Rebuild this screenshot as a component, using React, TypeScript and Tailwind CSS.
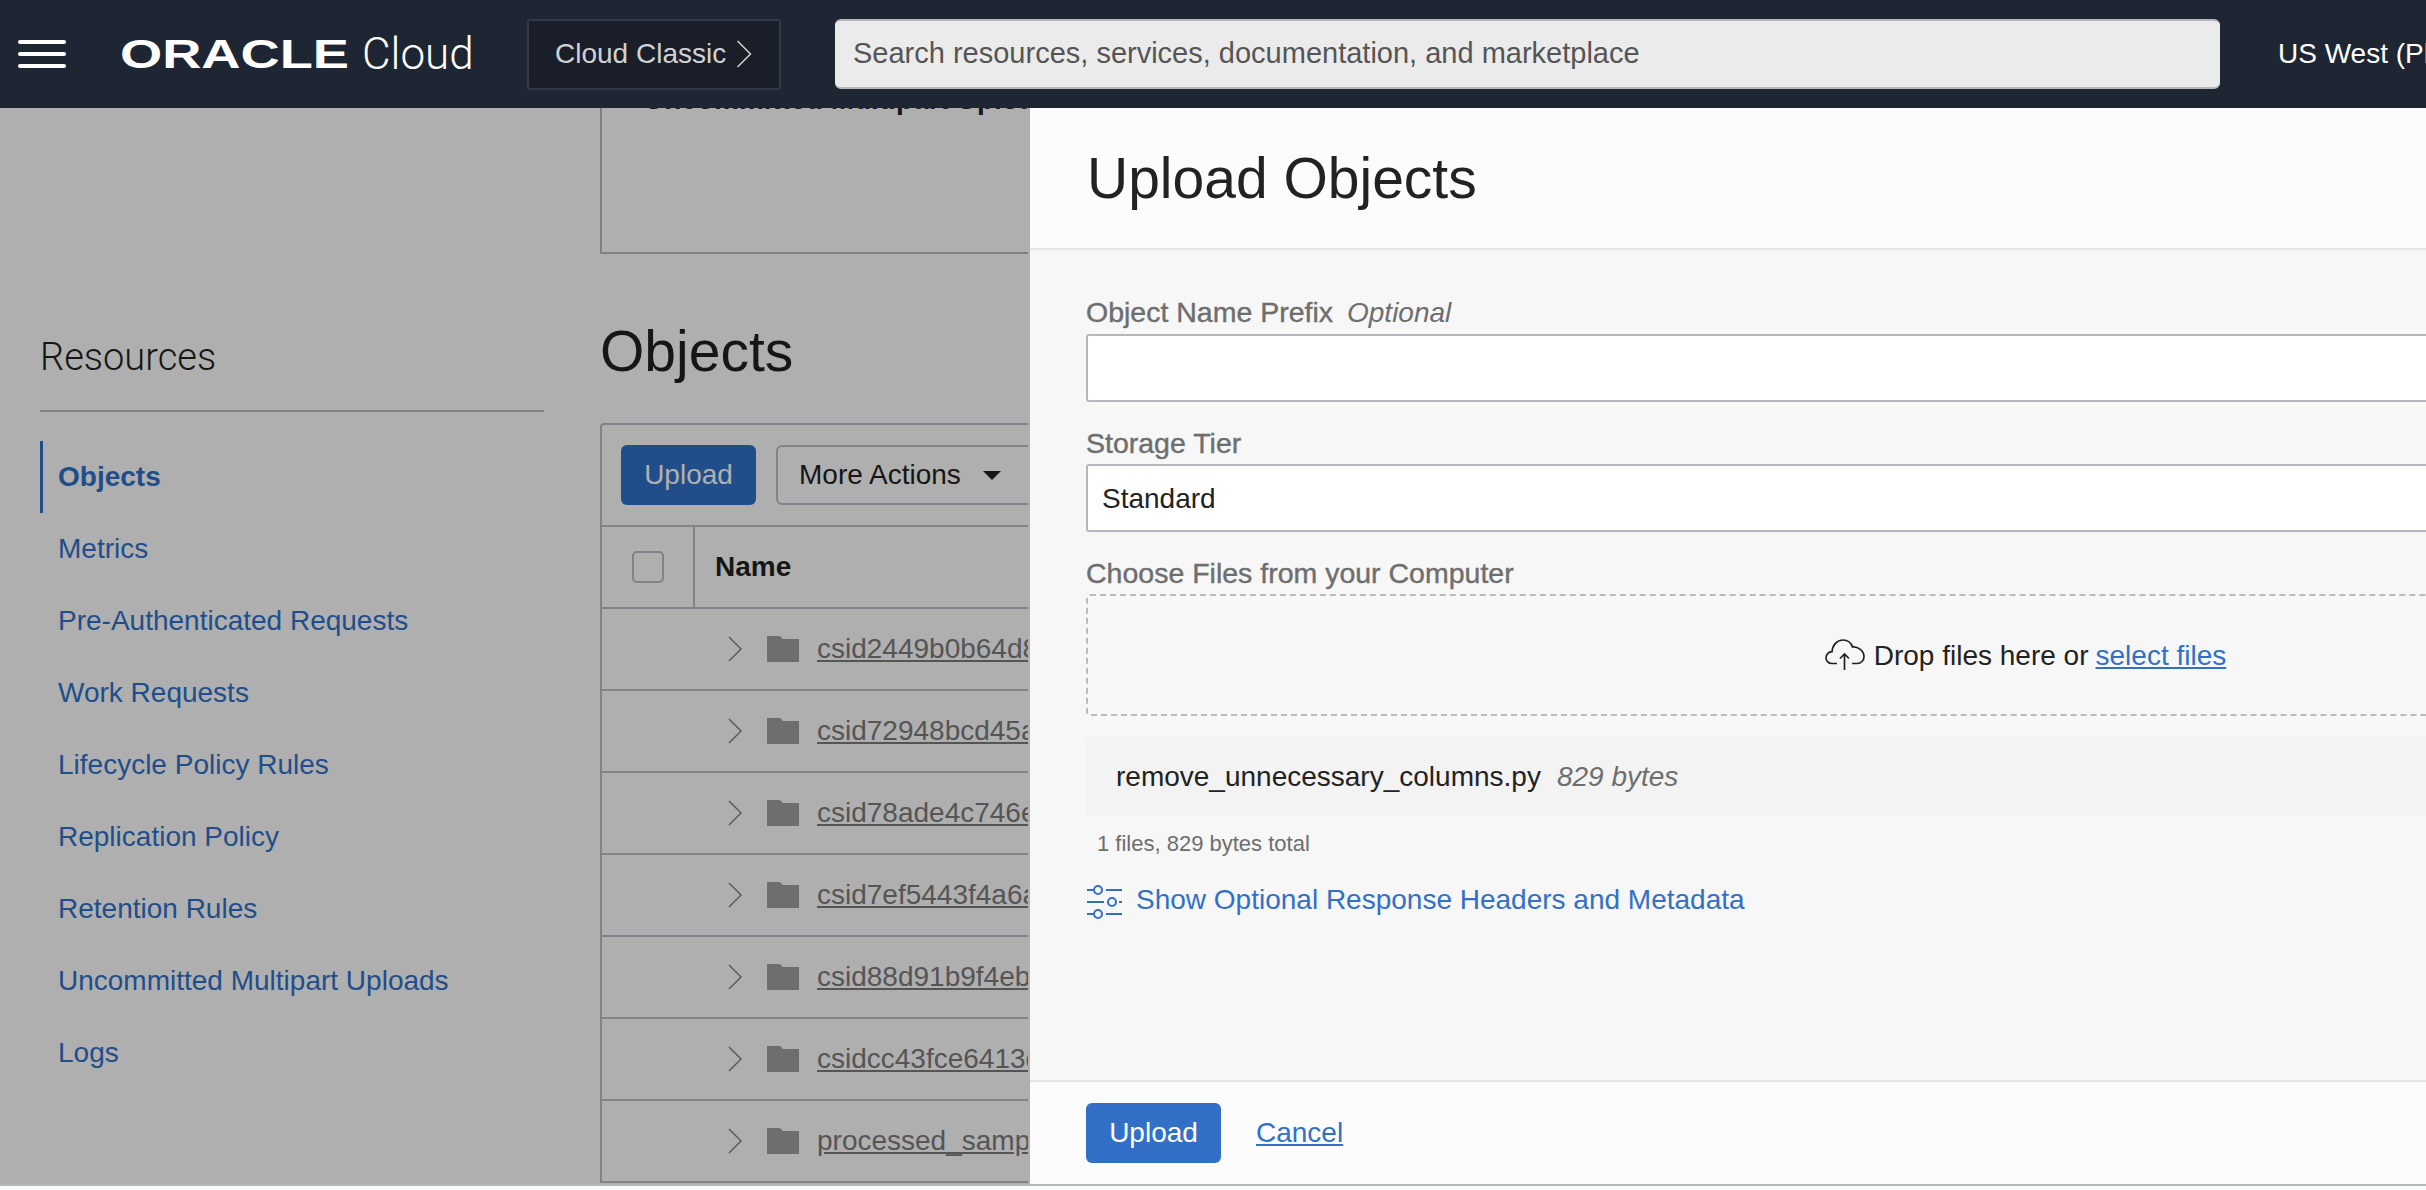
const resources = [
  "Metrics",
  "Pre-Authenticated Requests",
  "Work Requests",
  "Lifecycle Policy Rules",
  "Replication Policy",
  "Retention Rules",
  "Uncommitted Multipart Uploads",
  "Logs",
];

const rows = [
  "csid2449b0b64d8a4e",
  "csid72948bcd45a1f0",
  "csid78ade4c746e2b1",
  "csid7ef5443f4a6a90",
  "csid88d91b9f4eb7c3",
  "csidcc43fce6413d22",
  "processed_samples",
];

function Chevron({ className }: { className: string }) {
  return (
    <svg viewBox="0 0 14 26" fill="none" stroke="currentColor" strokeWidth="1.4" className={className}>
      <path d="M1 1l12 12L1 25" />
    </svg>
  );
}

function Folder() {
  return (
    <svg viewBox="0 0 32 26" className="h-[26px] w-[32px] fill-[#6e6e6e]">
      <path d="M0 0h13l3 3h16v23H0z" />
    </svg>
  );
}

function SlidersIcon() {
  return (
    <svg viewBox="0 0 35 35" fill="none" stroke="#3270c8" strokeWidth="2" className="h-[35px] w-[35px] shrink-0">
      <circle cx="11" cy="5" r="4" />
      <circle cx="25" cy="17" r="4" />
      <circle cx="11" cy="29" r="4" />
      <path d="M0 5h6M19 5h16M0 17h17M32 17h3M0 29h6M19 29h16" />
    </svg>
  );
}

function CloudUpload() {
  return (
    <svg viewBox="0 0 40 32" fill="none" stroke="#222" strokeWidth="1.7" className="h-[32px] w-[40px] shrink-0">
      <path d="M12 24.500H7C3.500 24.500 1 22 1 18.800C1 15.500 3.500 12.800 7 12.700C7.500 6 12 1 18 1C22.500 1 26 3.500 27.500 8C33 7.500 39 11.500 39 17.500C39 21.500 36 24.500 32 24.500H27" />
      <path d="M19.500 31V15M15 19.500L19.500 15L24 19.500" />
    </svg>
  );
}

export default function App() {
  return (
    <div className="flex h-[1190px] w-[2426px] flex-col overflow-hidden bg-white font-['Liberation_Sans',sans-serif] text-[28px] text-[#161616]">
      <header className="flex h-[108px] shrink-0 items-center bg-[#1f2633]">
        <div className="ml-[18px] flex h-[28px] w-[48px] shrink-0 flex-col justify-between">
          <span className="h-[4px] rounded-full bg-white" />
          <span className="h-[4px] rounded-full bg-white" />
          <span className="h-[4px] rounded-full bg-white" />
        </div>
        <svg viewBox="0 0 229 32" className="ml-[54px] h-[32px] w-[229px] shrink-0">
          <text x="0" y="30" fill="#fff" fontSize="41" fontWeight="700" textLength="229" lengthAdjust="spacingAndGlyphs" fontFamily="Liberation Sans">
            ORACLE
          </text>
        </svg>
        <span className="ml-[13px] w-[110px] shrink-0 font-['Roboto',sans-serif] text-[44px] font-light leading-none text-white">Cloud</span>
        <div className="ml-[55px] flex h-[71px] w-[254px] shrink-0 items-center rounded-[3px] border-2 border-[#333a47] bg-[#191e28] pl-[26px] text-[#d0d2d5]">
          <span>Cloud Classic</span>
          <Chevron className="ml-[10px] h-[28px] w-[16px]" />
        </div>
        <div className="ml-[54px] flex h-[70px] w-[1385px] shrink-0 items-center rounded-[6px] border-y-2 border-y-[#b4b8be] bg-[#ebebeb] pl-[18px] text-[29px] text-[#555]">
          Search resources, services, documentation, and marketplace
        </div>
        <span className="ml-[58px] shrink-0 whitespace-nowrap text-white">US West (Phoenix)</span>
      </header>

      <div className="flex h-[1076px] shrink-0">
        <div className="flex w-[1030px] shrink-0 overflow-hidden bg-[#afafaf]">
          <aside className="w-[600px] shrink-0 pl-[40px] pt-[222px]">
            <div className="h-[82px] w-[504px] border-b-2 border-[#808080] font-['Roboto',sans-serif] text-[38px] font-light leading-[54px]">
              Resources
            </div>
            <nav className="mt-[29px]">
              <div className="flex h-[72px] items-center border-l-[3px] border-[#214e8a] pl-[15px] font-bold text-[#214e8a]">Objects</div>
              {resources.map((r) => (
                <div key={r} className="flex h-[72px] items-center pl-[18px] text-[#214e8a]">
                  {r}
                </div>
              ))}
            </nav>
          </aside>

          <main className="min-w-0 flex-1 pr-[2px]">
            <div className="h-[146px] overflow-hidden border-b-2 border-l-2 border-[#808080] pl-[42px]">
              <div className="-mt-[24px] whitespace-nowrap font-bold leading-[32px]">Uncommitted Multipart Uploads</div>
            </div>
            <h2 className="mt-[66px] text-[57px] leading-[62px]">Objects</h2>
            <section className="mt-[41px] overflow-hidden rounded-tl-[4px] border-l-2 border-t-2 border-[#80848a]">
              <div className="flex h-[102px] items-center gap-[20px] border-b-2 border-[#80848a] pl-[19px]">
                <div className="flex h-[60px] w-[135px] shrink-0 items-center justify-center rounded-[6px] bg-[#214e8a] text-[#b0b0b0]">Upload</div>
                <div className="flex h-[60px] w-[300px] shrink-0 items-center rounded-[6px] border-2 border-[#80848a] pl-[21px]">
                  More Actions
                  <span className="ml-[22px] h-0 w-0 border-x-[9px] border-t-[9px] border-x-transparent border-t-[#161616]" />
                </div>
              </div>
              <div className="flex h-[82px] border-b-2 border-[#80848a]">
                <div className="flex w-[93px] shrink-0 items-center justify-center border-r-2 border-[#80848a]">
                  <span className="h-[32px] w-[32px] rounded-[5px] border-2 border-[#80848a]" />
                </div>
                <div className="flex items-center pl-[20px] font-bold">Name</div>
              </div>
              {rows.map((r) => (
                <div key={r} className="flex h-[82px] items-center border-b-2 border-[#80848a] pl-[126px] text-[#555]">
                  <Chevron className="h-[26px] w-[14px] shrink-0" />
                  <span className="ml-[25px] shrink-0">
                    <Folder />
                  </span>
                  <span className="ml-[18px] whitespace-nowrap underline">{r}</span>
                </div>
              ))}
            </section>
          </main>
        </div>

        <div className="flex min-w-0 flex-1 flex-col overflow-hidden bg-[#f7f7f7]">
          <div className="flex h-[142px] shrink-0 items-center border-b-2 border-[#e4e4e4] bg-[#fcfcfc] pl-[57px] text-[57px] leading-none text-[#222]">
            Upload Objects
          </div>
          <div className="w-[1935px] flex-1 pl-[56px]">
            <div className="pt-[46px] text-[28.500px] leading-[32px] text-[#6e6e6e] [-webkit-text-stroke:0.4px_#6e6e6e]">
              Object Name Prefix <em className="ml-[6px] text-[28px] font-normal [-webkit-text-stroke:0]">Optional</em>
            </div>
            <div className="mt-[5px] h-[68px] rounded-[3px] border-2 border-[#b4b7bd] bg-white" />
            <div className="mt-[25px] text-[28.500px] leading-[32px] text-[#6e6e6e] [-webkit-text-stroke:0.4px_#6e6e6e]">Storage Tier</div>
            <div className="mt-[5px] flex h-[68px] items-center rounded-[3px] border-2 border-[#b4b7bd] bg-white pl-[14px] pt-[2px] text-[#222]">Standard</div>
            <div className="mt-[25px] text-[28.500px] leading-[32px] text-[#6e6e6e] [-webkit-text-stroke:0.4px_#6e6e6e]">Choose Files from your Computer</div>
            <div className="mt-[5px] flex h-[122px] items-center justify-center rounded-[4px] border-2 border-dashed border-[#b8bbc0] text-[#222]">
              <CloudUpload />
              <span className="ml-[9px] pt-[2px]">Drop files here or</span>
              <span className="ml-[7px] pt-[2px] text-[#3270c8] underline">select files</span>
            </div>
            <div className="mt-[21px] flex h-[79px] items-center rounded-[4px] bg-[#f3f3f3] pl-[30px] text-[#222]">
              remove_unnecessary_columns.py
              <em className="ml-[16px] text-[#6e6e6e]">829 bytes</em>
            </div>
            <div className="mt-[14px] pl-[11px] text-[22px] leading-[28px] text-[#6e6e6e]">1 files, 829 bytes total</div>
            <div className="mt-[25px] flex items-center pl-[1px] text-[#3270c8]">
              <SlidersIcon />
              <span className="ml-[14px] -mt-[4px]">Show Optional Response Headers and Metadata</span>
            </div>
          </div>
          <div className="flex h-[104px] shrink-0 items-center border-t-2 border-[#e4e4e4] bg-[#fcfcfc] pl-[56px]">
            <div className="flex h-[60px] w-[135px] items-center justify-center rounded-[6px] bg-[#3270c8] text-white">Upload</div>
            <span className="ml-[35px] text-[#3270c8] underline">Cancel</span>
          </div>
        </div>
      </div>
      <div className="h-[2px] shrink-0 bg-[#b4b7bd]" />
    </div>
  );
}
